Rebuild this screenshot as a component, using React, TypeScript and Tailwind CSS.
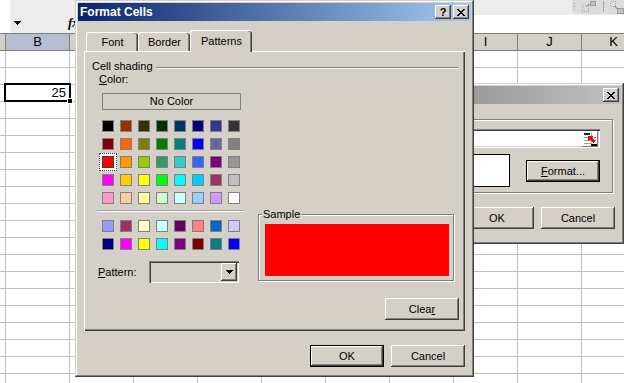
import React from "react";

const RAISED =
  "bg-[#d4d0c8] shadow-[inset_-1px_-1px_0_#404040,inset_1px_1px_0_#ffffff,inset_-2px_-2px_0_#808080]";
const DEFAULT_BTN =
  "bg-[#d4d0c8] border border-black shadow-[inset_-1px_-1px_0_#404040,inset_1px_1px_0_#ffffff,inset_-2px_-2px_0_#808080]";
const FRAME =
  "bg-[#d4d0c8] shadow-[inset_-1px_-1px_0_#404040,inset_1px_1px_0_#d4d0c8,inset_-2px_-2px_0_#808080,inset_2px_2px_0_#ffffff]";
const SUNKEN =
  "shadow-[inset_1px_1px_0_#808080,inset_2px_2px_0_#404040,inset_-1px_-1px_0_#ffffff,inset_-2px_-2px_0_#d4d0c8]";
const ETCHED =
  "border border-[#808080] shadow-[1px_1px_0_#ffffff,inset_1px_1px_0_#ffffff]";

const PALETTE_TOP = [
  ["#000000", "#993300", "#333300", "#003300", "#003366", "#000080", "#333399", "#333333"],
  ["#800000", "#FF6600", "#808000", "#008000", "#008080", "#0000FF", "#666699", "#808080"],
  ["#FF0000", "#FF9900", "#99CC00", "#339966", "#33CCCC", "#3366FF", "#800080", "#969696"],
  ["#FF00FF", "#FFCC00", "#FFFF00", "#00FF00", "#00FFFF", "#00CCFF", "#993366", "#C0C0C0"],
  ["#FF99CC", "#FFCC99", "#FFFF99", "#CCFFCC", "#CCFFFF", "#99CCFF", "#CC99FF", "#FFFFFF"],
];
const PALETTE_BOTTOM = [
  ["#9999FF", "#993366", "#FFFFCC", "#CCFFFF", "#660066", "#FF8080", "#0066CC", "#CCCCFF"],
  ["#000080", "#FF00FF", "#FFFF00", "#00FFFF", "#800080", "#800000", "#008080", "#0000FF"],
];

const COLS = ["B", "C", "D", "E", "F", "G", "H", "I", "J", "K"];
const VISIBLE_HEADERS = ["B", "I", "J", "K"];

function CloseGlyph() {
  return (
    <svg width="8" height="7" viewBox="0 0 8 7" shapeRendering="crispEdges">
      <path
        fill="#000"
        d="M0 0h2v1H0z M6 0h2v1H6z M1 1h2v1H1z M5 1h2v1H5z M2 2h4v1H2z M3 3h2v1H3z M2 4h4v1H2z M1 5h2v1H1z M5 5h2v1H5z M0 6h2v1H0z M6 6h2v1H6z"
      />
    </svg>
  );
}

function DownArrow() {
  return (
    <svg width="7" height="4" viewBox="0 0 7 4" shapeRendering="crispEdges">
      <path fill="#000" d="M0 0h7v1H0z M1 1h5v1H1z M2 2h3v1H2z M3 3h1v1H3z" />
    </svg>
  );
}

function RangeIcon() {
  return (
    <svg width="14" height="14" viewBox="0 0 14 14" shapeRendering="crispEdges">
      <rect x="0" y="0" width="14" height="14" fill="#ffffff" />
      <rect x="1" y="1" width="6" height="2" fill="#0a246a" />
      <rect x="1" y="5" width="12" height="1" fill="#a0a0a0" />
      <rect x="1" y="8" width="12" height="1" fill="#a0a0a0" />
      <rect x="1" y="11" width="7" height="1" fill="#a0a0a0" />
      <rect x="8" y="1" width="1" height="11" fill="#a0a0a0" />
      <path fill="#ff0000" d="M5 4 L10 4 L8.5 5.5 L12 9 L10 11 L6.5 7.5 L5 9 Z" />
      <rect x="8" y="12" width="6" height="2" fill="#000000" />
    </svg>
  );
}

function ToolbarIcons() {
  return (
    <svg width="52" height="14" viewBox="0 0 52 14" shapeRendering="crispEdges">
      <rect x="2" y="3" width="1" height="1" fill="#9a9a9a" />
      <rect x="2" y="6" width="1" height="1" fill="#9a9a9a" />
      <rect x="2" y="9" width="1" height="1" fill="#9a9a9a" />
      <path fill="none" stroke="#a8a8a8" strokeDasharray="1 1" d="M10.5 5.5h6v6h-6z" />
      <rect x="18" y="1" width="5" height="4" fill="#c4c4c4" stroke="#9c9c9c" strokeWidth="1" />
      <path stroke="#9c9c9c" d="M14 7 L18 4" />
      <rect x="31" y="1" width="1" height="11" fill="#a8a8a8" />
      <path fill="none" stroke="#a8a8a8" strokeDasharray="1 1" d="M38.5 1.5h5v5h-5z" />
      <path stroke="#9c9c9c" d="M42 6 L46 9" />
      <rect x="45" y="8" width="6" height="5" fill="#c4c4c4" stroke="#9c9c9c" strokeWidth="1" />
    </svg>
  );
}

function Swatch({ color, selected }: { color: string; selected?: boolean }) {
  if (selected) {
    return (
      <div className="w-[18px] h-[18px] border border-dotted border-[#404040] bg-white flex items-center justify-center">
        <div className="w-[12px] h-[12px] border border-[#404040]" style={{ backgroundColor: color }} />
      </div>
    );
  }
  return (
    <div className="w-[18px] h-[18px] flex items-center justify-center">
      <div className="w-[12px] h-[12px] border border-[#808080]" style={{ backgroundColor: color }} />
    </div>
  );
}

function Tab({ label, width, selected }: { label: string; width: string; selected?: boolean }) {
  if (selected) {
    return (
      <div
        className={`${width} h-[22px] relative z-10 bg-[#d4d0c8] border-l border-t border-white rounded-t-[3px] shadow-[inset_-1px_0_0_#404040,inset_-2px_0_0_#808080] flex justify-center pt-[4px] leading-[13px]`}
      >
        {label}
      </div>
    );
  }
  return (
    <div
      className={`${width} mt-[2px] h-[19px] bg-[#d4d0c8] border-l border-t border-white rounded-t-[3px] shadow-[inset_-1px_0_0_#404040,inset_-2px_0_0_#808080] flex justify-center pt-[3px] leading-[13px]`}
    >
      {label}
    </div>
  );
}

function Sheet() {
  const rows = Array.from({ length: 20 }, (_, i) => i);
  return (
    <div className="flex flex-col">
      <div className="flex h-[15px] bg-[#ececec]">
        <div className="w-[10px] bg-white" />
        <div className="flex-1" />
        <div className="w-[52px] h-[14px] bg-[#dcdcdc] rounded-bl-[5px]">
          <ToolbarIcons />
        </div>
      </div>
      <div className="flex h-[18px]">
        <div className="w-[10px] bg-white" />
        <div className="w-[14px] bg-[#ececec] flex items-center justify-center pb-[3px]">
          <DownArrow />
        </div>
        <div className="w-[52px] bg-[#ececec] flex items-center pl-[44px] pb-[2px] font-['Liberation_Serif',serif] italic font-bold text-[13px] text-black">
          fx
        </div>
        <div className="flex-1 bg-white" />
      </div>
      <div className="flex h-[18px] border-t border-b border-[#808080] bg-[#d4d0c8] text-[13px]">
        <div className="w-[6px] shrink-0 border-r border-[#808080]" />
        {COLS.map((c) => (
          <div
            key={c}
            className={
              c === "B"
                ? "w-[64px] shrink-0 border-r border-[#808080] bg-[#b6bdd2] flex items-center justify-center leading-[16px]"
                : "w-[64px] shrink-0 border-r border-[#808080] flex items-center justify-center leading-[16px]"
            }
          >
            {VISIBLE_HEADERS.includes(c) ? c : ""}
          </div>
        ))}
      </div>
      {rows.map((r) => (
        <div key={r} className="flex h-[17px] border-b border-[#c0c0c0]">
          <div className="w-[6px] shrink-0 border-r border-[#c0c0c0]" />
          {COLS.map((c) =>
            r === 2 && c === "B" ? (
              <div
                key={c}
                className="relative w-[64px] shrink-0 border-r border-[#c0c0c0] text-right pr-[3px] text-[13px] leading-[16px]"
              >
                25
                <div className="absolute -left-[2px] -top-[2px] w-[67px] h-[19px] border-2 border-black">
                  <div className="absolute -right-[4px] -bottom-[4px] w-[6px] h-[6px] bg-black border border-white" />
                </div>
              </div>
            ) : (
              <div key={c} className="w-[64px] shrink-0 border-r border-[#c0c0c0]" />
            )
          )}
        </div>
      ))}
    </div>
  );
}

function ConditionalDialog() {
  return (
    <div className={`absolute left-[360px] top-[83px] w-[264px] h-[161px] p-[3px] flex flex-col ${FRAME}`}>
      <div className="h-[18px] bg-[linear-gradient(to_right,#808080,#c0c0c0)] flex items-center justify-end pr-[2px]">
        <div className={`w-[16px] h-[14px] flex items-center justify-center ${RAISED}`}>
          <CloseGlyph />
        </div>
      </div>
      <div className={`mt-[15px] ml-[20px] mr-[8px] h-[74px] pt-[9px] pr-[12px] flex flex-col items-end ${ETCHED}`}>
        <div className={`w-[200px] h-[19px] bg-white flex items-center justify-end pr-[2px] ${SUNKEN}`}>
          <div className="w-[16px] h-[16px] flex items-center justify-center bg-[#d4d0c8] shadow-[inset_-1px_-1px_0_#808080,inset_1px_1px_0_#ffffff]">
            <RangeIcon />
          </div>
        </div>
        <div className="mt-[6px] flex items-start gap-[16px]">
          <div className="w-[100px] h-[33px] bg-white border border-black" />
          <div className={`mt-[6px] w-[74px] h-[22px] flex items-center justify-center ${DEFAULT_BTN}`}>
            <span>
              <u>F</u>ormat...
            </span>
          </div>
        </div>
      </div>
      <div className="mt-[14px] mr-[6px] flex justify-end gap-[7px]">
        <div className={`w-[74px] h-[22px] flex items-center justify-center ${RAISED}`}>OK</div>
        <div className={`w-[74px] h-[22px] flex items-center justify-center ${RAISED}`}>Cancel</div>
      </div>
    </div>
  );
}

function FormatCellsDialog() {
  return (
    <div className={`absolute left-[75px] top-0 w-[399px] h-[377px] p-[3px] flex flex-col ${FRAME}`}>
      <div className="h-[18px] bg-[linear-gradient(to_right,#0a246a,#a6caf0)] flex items-center pl-[2px] pr-[2px]">
        <span className="flex-1 text-white font-bold text-[12px] leading-[14px]">Format Cells</span>
        <div className="flex gap-[2px]">
          <div className={`w-[16px] h-[14px] flex items-center justify-center font-bold text-[11px] leading-[12px] ${RAISED}`}>
            ?
          </div>
          <div className={`w-[16px] h-[14px] flex items-center justify-center ${RAISED}`}>
            <CloseGlyph />
          </div>
        </div>
      </div>

      <div className="mt-[9px] ml-[8px] h-[21px] flex items-start">
        <Tab label="Font" width="w-[52px]" />
        <Tab label="Border" width="w-[52px]" />
        <Tab label="Patterns" width="w-[62px]" selected />
      </div>

      <div className="ml-[6px] w-[381px] h-[280px] shadow-[inset_1px_1px_0_#ffffff,inset_-1px_-1px_0_#404040,inset_-2px_-2px_0_#808080] flex flex-col">
        <div className="mt-[9px] h-[13px] pl-[8px] flex items-center leading-[13px]">
          <span>Cell shading</span>
          <div className="flex-1 ml-[3px] mr-[7px] mt-[2px] h-0 border-t border-t-[#808080] border-b border-b-white" />
        </div>

        <div className="flex">
          <div className="w-[174px] flex flex-col">
            <div className="pl-[15px] h-[13px] leading-[13px]">
              <u>C</u>olor:
            </div>
            <div className="mt-[7px] ml-[18px] w-[139px] h-[17px] border border-[#808080] flex items-center justify-center leading-[13px]">
              No Color
            </div>
            <div className="mt-[7px] ml-[15px] w-[144px] grid grid-cols-8">
              {PALETTE_TOP.map((row, ri) =>
                row.map((c, ci) => <Swatch key={`t${ri}-${ci}`} color={c} selected={ri === 2 && ci === 0} />)
              )}
            </div>
            <div className="ml-[13px] w-[148px] h-[10px] pt-[3px]">
              <div className="h-0 border-t border-t-[#a0a0a0] border-b border-b-white" />
            </div>
            <div className="ml-[15px] w-[144px] grid grid-cols-8">
              {PALETTE_BOTTOM.map((row, ri) => row.map((c, ci) => <Swatch key={`b${ri}-${ci}`} color={c} />))}
            </div>
            <div className="mt-[8px] h-[22px] flex items-center">
              <div className="w-[65px] pl-[14px] leading-[13px]">
                <u>P</u>attern:
              </div>
              <div className={`w-[90px] h-[22px] bg-[#d4d0c8] p-[2px] flex justify-end ${SUNKEN}`}>
                <div className={`w-[16px] h-[18px] flex items-center justify-center ${RAISED}`}>
                  <DownArrow />
                </div>
              </div>
            </div>
          </div>

          <div className="flex flex-col">
            <div className={`relative mt-[141px] w-[196px] h-[67px] pt-[9px] pl-[6px] ${ETCHED}`}>
              <span className="absolute -top-[7px] left-[3px] px-[1px] bg-[#d4d0c8] leading-[13px]">Sample</span>
              <div className="w-[184px] h-[52px] bg-[#ff0000]" />
            </div>
            <div className={`mt-[17px] ml-[127px] w-[74px] h-[22px] flex items-center justify-center ${RAISED}`}>
              <span>
                Clea<u>r</u>
              </span>
            </div>
          </div>
        </div>
      </div>

      <div className="mt-[14px] mr-[6px] flex justify-end gap-[7px]">
        <div className={`w-[74px] h-[22px] flex items-center justify-center ${DEFAULT_BTN}`}>OK</div>
        <div className={`w-[74px] h-[22px] flex items-center justify-center ${RAISED}`}>Cancel</div>
      </div>
    </div>
  );
}

export default function App() {
  return (
    <div className="relative w-[624px] h-[383px] overflow-hidden bg-white text-black text-[11px] font-['Liberation_Sans',Arial,sans-serif] select-none">
      <Sheet />
      <ConditionalDialog />
      <FormatCellsDialog />
    </div>
  );
}
